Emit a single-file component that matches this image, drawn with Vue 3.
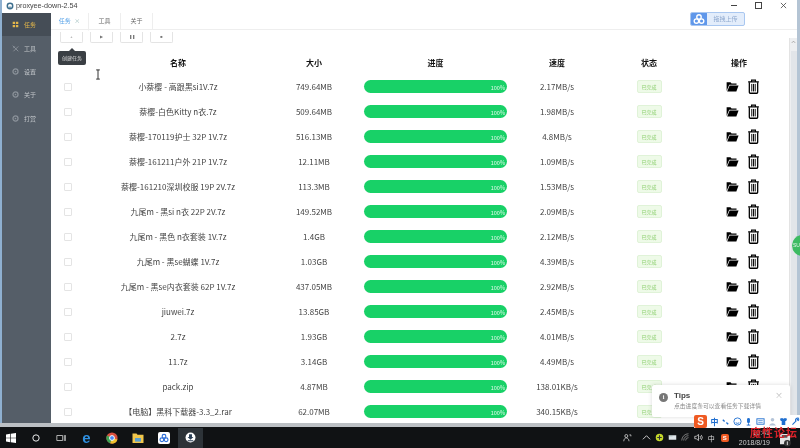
<script setup>
const menus = [
  { name: "任务", active: true },
  { name: "工具" },
  { name: "设置" },
  { name: "关于" },
  { name: "打赏" },
];

const tasks = [
  ["小萘樱 - 高跟黑si1V.7z", "749.64MB", "2.17MB/s"],
  ["萘樱-白色Kitty n衣.7z", "509.64MB", "1.98MB/s"],
  ["萘樱-170119护士 32P 1V.7z", "516.13MB", "4.8MB/s"],
  ["萘樱-161211户外 21P 1V.7z", "12.11MB", "1.09MB/s"],
  ["萘樱-161210深圳校服 19P 2V.7z", "113.3MB", "1.53MB/s"],
  ["九尾m - 黑si n衣 22P 2V.7z", "149.52MB", "2.09MB/s"],
  ["九尾m - 黑色 n衣套装 1V.7z", "1.4GB", "2.12MB/s"],
  ["九尾m - 黑se蝴蝶 1V.7z", "1.03GB", "4.39MB/s"],
  ["九尾m - 黑se内衣套装 62P 1V.7z", "437.05MB", "2.92MB/s"],
  ["jiuwei.7z", "13.85GB", "2.45MB/s"],
  ["2.7z", "1.93GB", "4.01MB/s"],
  ["11.7z", "3.14GB", "4.49MB/s"],
  ["pack.zip", "4.87MB", "138.01KB/s"],
  ["【电脑】黑科下载器-3.3_2.rar", "62.07MB", "340.15KB/s"],
];

const tools = ["+", "▶", "❚❚", "■"];
</script>

<template>
  <div class="screen">
    <div class="window">
      <header class="titlebar">
        <svg class="app-icon" viewBox="0 0 12 12"><circle cx="6" cy="6" r="5.2" fill="#3d6f8e" /><circle cx="6" cy="6" r="3" fill="#fff" /><path d="M4 7h4v1.4H4z" fill="#3d6f8e" /></svg>
        <span class="app-title">proxyee-down-2.54</span>
        <div class="win-btns">
          <i class="win-min"></i>
          <i class="win-max"></i>
          <svg class="win-close" viewBox="0 0 8 8"><path d="M1 1l6 6M7 1L1 7" stroke="#444" stroke-width="0.9" /></svg>
        </div>
      </header>

      <div class="body">
        <aside class="sidebar">
          <div v-for="(m, i) in menus" :key="m.name" class="menu-item" :class="{ active: m.active }">
            <svg v-if="i === 0" class="menu-icon" viewBox="0 0 10 10"><path d="M1 1h3.4v3.4H1zM5.6 1H9v3.4H5.6zM1 5.6h3.4V9H1zM5.6 5.6H9V9H5.6z" fill="#e4b74a" /></svg>
            <svg v-else-if="i === 1" class="menu-icon" viewBox="0 0 10 10"><path d="M1 1l8 8M9 2L2 9M2 4.5L4 2" stroke="#8b929a" stroke-width="1.3" fill="none" /></svg>
            <svg v-else class="menu-icon" viewBox="0 0 10 10"><circle cx="5" cy="5" r="3.6" fill="none" stroke="#8b929a" stroke-width="1.8" /><circle cx="5" cy="5" r="1.2" fill="#8b929a" /></svg>
            <span>{{ m.name }}</span>
          </div>
        </aside>

        <main class="main">
          <div class="tabs">
            <div class="tab current">任务 <span class="tab-x">×</span></div>
            <div class="tab">工具</div>
            <div class="tab">关于</div>
            <div class="upload">
              <span class="upload-icon">
                <svg viewBox="0 0 14 14" width="12" height="12"><g fill="none" stroke="#fff" stroke-width="1.6"><circle cx="7" cy="4.6" r="2.6" /><circle cx="4" cy="9.4" r="2.6" /><circle cx="10" cy="9.4" r="2.6" /></g></svg>
              </span>
              <span class="upload-text">拖拽上传</span>
            </div>
          </div>

          <div class="content">
            <div class="list">
              <div class="toolbar">
                <button v-for="t in tools" :key="t" class="tool-btn">{{ t }}</button>
              </div>
              <div class="row head">
                <span></span>
                <span>名称</span>
                <span>大小</span>
                <span>进度</span>
                <span>速度</span>
                <span>状态</span>
                <span>操作</span>
              </div>
              <div v-for="task in tasks" :key="task[0]" class="row">
                <span class="check-cell"><i class="check"></i></span>
                <span>{{ task[0] }}</span>
                <span>{{ task[1] }}</span>
                <span class="bar"><em>100%</em></span>
                <span>{{ task[2] }}</span>
                <span class="tag-cell"><b class="tag">已完成</b></span>
                <span class="ops">
                  <svg class="op-icon" viewBox="0 0 14 12"><path d="M0.6 10.8V1.4h4.2l1.2 1.4h5.4v1.4H3.4L0.6 10.8z" fill="#000" /><path d="M3.8 5h9.8l-2.4 6.4H1.2z" fill="#000" /></svg>
                  <svg class="op-icon trash" viewBox="0 0 12 14"><path d="M1 2.6h10M4.2 2.4V1h3.6v1.4" stroke="#000" stroke-width="1.1" fill="none" /><path d="M2.1 3v9.4c0 .6.3.9.9.9h6c.6 0 .9-.3.9-.9V3" stroke="#000" stroke-width="1.2" fill="none" /><path d="M4.4 4.6v7M6 4.6v7M7.6 4.6v7" stroke="#000" stroke-width="0.9" /></svg>
                </span>
              </div>
            </div>
            <div class="scrollbar">
              <svg class="scroll-up" viewBox="0 0 6 4"><path d="M1 3l2-2 2 2" stroke="#999" fill="none" /></svg>
              <i class="thumb"></i>
            </div>
          </div>
        </main>
      </div>
    </div>

    <div class="win-bottom"></div>

    <footer class="taskbar">
      <svg class="tb-icon" viewBox="0 0 12 12"><path d="M0 1.8L5 1v4.6H0zM5.8 .9L12 0v5.6H5.8zM0 6.4h5V11l-5-.8zM5.8 6.4H12V12l-6.2-.9z" fill="#fff" /></svg>
      <svg class="tb-icon" viewBox="0 0 12 12"><circle cx="6" cy="6" r="3.8" fill="none" stroke="#fff" stroke-width="1.1" /></svg>
      <svg class="tb-icon" viewBox="0 0 12 12"><path d="M1 3h7v6H1zM10 2.5v7M11.6 2.5v7" stroke="#ccc" fill="none" /></svg>
      <span class="tb-app edge">e</span>
      <svg class="tb-icon big" viewBox="0 0 12 12"><circle cx="6" cy="6" r="5.6" fill="#d9503f" /><path d="M6 6L11.5 7.5A5.6 5.6 0 0 1 4 11.3z" fill="#efc22f" /><path d="M6 6L4 11.3A5.6 5.6 0 0 1 1 3.4z" fill="#3ba354" /><circle cx="6" cy="6" r="2.4" fill="#4c8bf5" stroke="#fff" /></svg>
      <svg class="tb-icon big" viewBox="0 0 12 12"><path d="M.5 1.5h4l1 1.2h6v8.3H.5z" fill="#f0c64c" /><path d="M3 6h6v3.6H3z" fill="#5a9fd0" /></svg>
      <span class="tb-app baidu">
        <svg viewBox="0 0 14 14" width="10" height="10"><g fill="none" stroke="#2f6fd8" stroke-width="1.6"><circle cx="7" cy="4.6" r="2.6" /><circle cx="4" cy="9.4" r="2.6" /><circle cx="10" cy="9.4" r="2.6" /></g></svg>
      </span>
      <span class="tb-current">
        <svg viewBox="0 0 12 12" width="11" height="11"><circle cx="6" cy="6" r="5.4" fill="#fff" /><path d="M4.4 2.4h3.2v3h1.6L6 8.4 2.8 5.4h1.6zM3 9h6v1H3z" fill="#2a3f55" /></svg>
      </span>

      <div class="tray">
        <svg class="tr-icon person" viewBox="0 0 12 12"><circle cx="4.4" cy="4" r="2" fill="none" stroke="#ddd" /><path d="M1 11c0-3 2-4.5 3.4-4.5S8 8 8 11M8.5 2.5h2v2" stroke="#ddd" fill="none" /></svg>
        <svg class="tr-icon" viewBox="0 0 10 6"><path d="M1 5l4-4 4 4" stroke="#ddd" fill="none" /></svg>
        <svg class="tr-icon" viewBox="0 0 12 12"><circle cx="6" cy="6" r="5" fill="#c6d92c" /><path d="M6 3v6M3 6h6" stroke="#333" stroke-width="1.4" /></svg>
        <svg class="tr-icon" viewBox="0 0 12 12"><path d="M1 3h10v6H1z" fill="#dfe6ea" /><path d="M1 3h5v1.4H1z" fill="#9aa" /></svg>
        <svg class="tr-icon" viewBox="0 0 12 12"><path d="M1 10a9 9 0 0 1 9-9M3.6 10A6.4 6.4 0 0 1 10 3.6M6.2 10A3.8 3.8 0 0 1 10 6.2" stroke="#999" fill="none" /></svg>
        <svg class="tr-icon" viewBox="0 0 12 12"><path d="M1 4.4h2L6 2v8L3 7.6H1z" fill="none" stroke="#ddd" /><path d="M8 4a3 3 0 0 1 0 4M9.6 2.6a5 5 0 0 1 0 6.8" stroke="#ddd" fill="none" /></svg>
        <span class="tr-text">中</span>
        <span class="s-logo">S</span>
        <div class="clock"><span>10:41</span><span>2018/8/19</span></div>
      </div>
      <svg class="notify" viewBox="0 0 12 14"><path d="M0 0h9l2 2v9H0z" fill="#e4e4e4" /><path d="M2 1h6v3H2z" fill="#555" /><circle cx="8" cy="10" r="3.6" fill="#333" /><path d="M8 8v4" stroke="#eee" /></svg>
    </footer>

    <!-- 浮层 -->
    <div class="tooltip">创建任务</div>
    <svg class="cursor" viewBox="0 0 6 12"><path d="M1 1h4M3 1v10M1 11h4" stroke="#222" stroke-width="1" fill="none" /></svg>
    <div class="float-ball">SU</div>

    <div class="notice">
      <span class="notice-i">i</span>
      <div>
        <div class="notice-title">Tips</div>
        <div class="notice-text">点击进度条可以查看任务下载详情</div>
      </div>
      <span class="notice-x">×</span>
    </div>

    <div class="ime">
      <span class="s-logo">S</span>
      <span class="ime-text">中</span>
      <svg viewBox="0 0 10 10"><path d="M2 3l2 2M6 6l2 2" stroke="#1f6fd0" stroke-width="1.5" /></svg>
      <svg viewBox="0 0 10 10"><circle cx="5" cy="5" r="4" fill="none" stroke="#1f6fd0" /><path d="M3 6.4q2 1.4 4 0" stroke="#1f6fd0" fill="none" /></svg>
      <svg viewBox="0 0 10 10"><rect x="3.4" y="1" width="3.2" height="6" rx="1.6" fill="#1f6fd0" /><path d="M5 7v2M3 9h4" stroke="#1f6fd0" /></svg>
      <svg viewBox="0 0 10 10"><rect x="1" y="2" width="8" height="6" fill="none" stroke="#1f6fd0" /><path d="M2.5 4h5M2.5 6h5" stroke="#1f6fd0" stroke-width=".7" /></svg>
      <svg viewBox="0 0 10 10"><circle cx="5" cy="3" r="2" fill="#b4c4d8" /><path d="M1 9.5q4-5 8 0z" fill="#b4c4d8" /></svg>
      <svg viewBox="0 0 10 10"><path d="M1 2l2.4-1L5 2l1.6-1L9 2 8 4.4H7V9H3V4.4H2z" fill="#1f6fd0" /></svg>
      <svg viewBox="0 0 10 10"><path d="M1.6 8.6L6 4M5.4 4.4a2.2 2.2 0 0 1 3-3L7 3l1 .8 1-1.2" stroke="#1f6fd0" stroke-width="1.2" fill="none" /></svg>
    </div>
    <div class="watermark">魔性论坛</div>
  </div>
</template>

<style>
html,
body {
  margin: 0;
  overflow: hidden;
  background: #000;
}
</style>

<style scoped>
.screen {
  position: relative;
  width: 800px;
  height: 448px;
  overflow: hidden;
  display: flex;
  flex-direction: column;
  font-family: "Noto Sans CJK SC", "Liberation Sans", sans-serif;
  color: #555;
  filter: blur(0.35px);
}

.window {
  height: 424px;
  display: flex;
  flex-direction: column;
  background: #fff;
  border-left: 2px solid #8fb0d0;
  border-right: 3px solid #b4c4d4;
  box-sizing: border-box;
  overflow: hidden;
}

.titlebar {
  height: 13px;
  flex: none;
  box-sizing: border-box;
  padding: 0 0 2px 4px;
  display: flex;
  align-items: center;
  font-family: "Liberation Sans", sans-serif;
  font-size: 7.2px;
  color: #444;
}

.app-icon {
  width: 8px;
  height: 8px;
  margin-right: 2px;
}

.win-btns {
  margin-left: auto;
  display: flex;
  align-items: center;
  gap: 18px;
  padding-right: 10px;
}

.win-min {
  width: 6px;
  height: 1px;
  background: #444;
}

.win-max {
  width: 5px;
  height: 5px;
  border: 1px solid #444;
}

.win-close {
  width: 7px;
  height: 7px;
}

.body {
  flex: 1;
  min-height: 0;
  display: flex;
}

.sidebar {
  width: 49px;
  flex: none;
  background: #555e68;
}

.menu-item {
  height: 23.4px;
  display: flex;
  align-items: center;
  padding-left: 10px;
  gap: 5px;
  font-size: 6px;
  color: #c4c8cc;
}

.menu-item.active {
  background: #454d56;
  color: #e4b74a;
}

.menu-icon {
  width: 7px;
  height: 7px;
}

.main {
  flex: 1;
  min-width: 0;
  display: flex;
  flex-direction: column;
}

.tabs {
  height: 16px;
  flex: none;
  display: flex;
  border-bottom: 1px solid #eee;
  background: #fff;
  position: relative;
}

.tab {
  width: 31px;
  border-right: 1px solid #eee;
  font-size: 6px;
  line-height: 16px;
  text-align: center;
  color: #666;
}

.tab.current {
  width: 37px;
  color: #5aa4e8;
  border-bottom: 1px solid #fff;
  height: 17px;
}

.tab-x {
  color: #9bb;
  margin-left: 2px;
}

.upload {
  position: absolute;
  left: 639px;
  top: -1px;
  width: 55px;
  height: 14px;
  box-sizing: border-box;
  display: flex;
  border: 1px solid #a9c7f0;
  border-radius: 2px;
  background: #e3edfb;
  overflow: hidden;
}

.upload-icon {
  width: 16px;
  display: flex;
  align-items: center;
  justify-content: center;
  background: #5f97ea;
}

.upload-text {
  flex: 1;
  font-size: 6px;
  line-height: 12px;
  text-align: center;
  color: #8fa9cf;
}

.content {
  flex: 1;
  min-height: 0;
  display: flex;
}

.list {
  width: 738px;
  flex: none;
  overflow: hidden;
}

.toolbar {
  height: 15px;
  display: flex;
  align-items: flex-end;
  gap: 7px;
  padding: 0 0 1px 9px;
  box-sizing: border-box;
  margin-top: -1px;
}

.tool-btn {
  width: 23px;
  height: 11px;
  padding: 0;
  border: 1px solid #e4e4e4;
  border-top: 0;
  border-radius: 0 0 2px 2px;
  background: #fff;
  font-size: 4px;
  line-height: 6px;
  color: #777;
}

.row {
  height: 25px;
  display: grid;
  grid-template-columns: 39px 176px 96px 147px 96px 88px 92px;
  align-items: center;
  text-align: center;
  font-size: 8px;
  color: #444;
}

.head {
  margin-top: 6px;
  height: 24px;
  color: #111;
  font-weight: 700;
}

.check-cell {
  display: flex;
  padding-left: 13px;
}

.check {
  width: 6px;
  height: 6px;
  border: 1px solid #e4e4e4;
  border-radius: 1px;
}

.bar {
  display: block;
  width: 143px;
  height: 13px;
  margin-left: 2px;
  border-radius: 7px;
  background: #18d167;
  text-align: right;
  line-height: 13px;
}

.bar em {
  font-style: normal;
  font-size: 5.5px;
  padding-right: 2px;
  color: #e4f9ec;
}

.tag-cell {
  display: flex;
  justify-content: center;
}

.tag {
  width: 25px;
  height: 13px;
  box-sizing: border-box;
  border: 1px solid #e0f3d8;
  border-radius: 2px;
  background: #eefae8;
  color: #8ccf6f;
  font-weight: 400;
  font-size: 5px;
  line-height: 11px;
  text-align: center;
}

.ops {
  display: flex;
  justify-content: center;
  align-items: center;
  gap: 8px;
  padding-left: 7px;
}

.op-icon {
  width: 13px;
  height: 11px;
}

.op-icon.trash {
  width: 13px;
  height: 15px;
}

.scrollbar {
  flex: 1;
  margin-top: 8px;
  background: #eeeff1;
  border-left: 1px solid #e3e3e3;
  display: flex;
  flex-direction: column;
  align-items: center;
}

.scroll-up {
  width: 5px;
  height: 4px;
  margin: 2px 0;
}

.thumb {
  width: 6px;
  flex: 1;
  margin-top: 5px;
  background: #e2e5e9;
}

.win-bottom {
  height: 4px;
  flex: none;
  background: #bcc0c4;
}

.taskbar {
  flex: 1;
  display: flex;
  align-items: center;
  background: #101214;
  color: #ddd;
  position: relative;
  padding-left: 6px;
}

.tb-icon {
  width: 10px;
  height: 10px;
  margin-right: 15px;
  flex: none;
}

.tb-icon.big {
  width: 12px;
  height: 12px;
  margin-right: 14px;
}

.tb-app {
  width: 11px;
  height: 11px;
  margin-right: 14px;
  display: flex;
  align-items: center;
  justify-content: center;
  flex: none;
}

.edge {
  color: #2f8fe0;
  font: 700 15px/11px "Liberation Sans", sans-serif;
}

.baidu {
  width: 12px;
  height: 12px;
  margin-right: 8px;
  background: #fff;
  border-radius: 2px;
}

.tb-current {
  width: 25px;
  height: 20px;
  display: flex;
  align-items: center;
  justify-content: center;
  background: #2d3338;
  flex: none;
}

.tray {
  margin-left: auto;
  display: flex;
  align-items: center;
  gap: 4px;
  padding-right: 30px;
}

.tr-icon {
  width: 9px;
  height: 9px;
}

.tr-icon.person {
  margin-right: 6px;
}

.tr-text {
  font-size: 7px;
  margin: 0 1px;
}

.tray .s-logo {
  width: 8px;
  height: 8px;
  margin-left: 1px;
  font-size: 6px;
  line-height: 8px;
}

.clock {
  display: flex;
  flex-direction: column;
  align-items: flex-end;
  margin-left: 6px;
  padding-top: 1px;
  font: 7px/10px "Liberation Sans", sans-serif;
  color: #ccc;
}

.notify {
  position: absolute;
  left: 780px;
  top: 7px;
  width: 11px;
  height: 13px;
}

.tooltip {
  position: absolute;
  left: 58px;
  top: 51px;
  width: 28px;
  height: 14px;
  border-radius: 2px;
  background: #3a3f44;
  color: #ddd;
  font-size: 5px;
  line-height: 14px;
  text-align: center;
}

.tooltip::before {
  content: "";
  position: absolute;
  left: 11px;
  top: -3px;
  border: 3px solid transparent;
  border-top: 0;
  border-bottom-color: #3a3f44;
}

.cursor {
  position: absolute;
  left: 95px;
  top: 69px;
  width: 6px;
  height: 11px;
}

.float-ball {
  position: absolute;
  left: 792px;
  top: 235px;
  width: 21px;
  height: 21px;
  border-radius: 50%;
  background: #3dbb62;
  color: #e8f6ec;
  font: 5px/21px "Liberation Sans", sans-serif;
  padding-left: 1px;
  box-sizing: border-box;
}

.notice {
  position: absolute;
  left: 652px;
  top: 385px;
  width: 138px;
  height: 32px;
  display: flex;
  gap: 6px;
  padding: 6px 0 0 7px;
  box-sizing: border-box;
  border-radius: 2px;
  background: #fff;
  box-shadow: 0 0 4px rgba(0, 0, 0, 0.15);
}

.notice-i {
  width: 9px;
  height: 9px;
  margin-top: 2px;
  border-radius: 50%;
  background: #777;
  color: #fff;
  font: 700 6px/9px "Liberation Serif", serif;
  text-align: center;
}

.notice-title {
  font: 700 8px/10px "Liberation Sans", sans-serif;
  color: #444;
}

.notice-text {
  margin-top: 1px;
  font-size: 5.8px;
  line-height: 8px;
  color: #888;
}

.notice-x {
  position: absolute;
  right: 7px;
  top: 5px;
  font-size: 8px;
  line-height: 9px;
  color: #bbb;
}

.ime {
  position: absolute;
  left: 694px;
  top: 415px;
  width: 106px;
  height: 13px;
  display: flex;
  align-items: center;
  gap: 2.6px;
  background: #fff;
}

.ime svg {
  width: 9px;
  height: 9px;
  flex: none;
}

.ime-text {
  margin-left: 1px;
  font-size: 8px;
  font-weight: 700;
  color: #1f6fd0;
}

.s-logo {
  width: 13px;
  height: 13px;
  flex: none;
  border-radius: 2px;
  background: #ef5a22;
  color: #fff;
  font: 700 10px/13px "Liberation Sans", sans-serif;
  text-align: center;
}

.watermark {
  position: absolute;
  left: 750px;
  top: 426px;
  font-size: 11px;
  font-weight: 700;
  line-height: 12px;
  letter-spacing: 1px;
  white-space: nowrap;
  color: #d8222a;
}
</style>
